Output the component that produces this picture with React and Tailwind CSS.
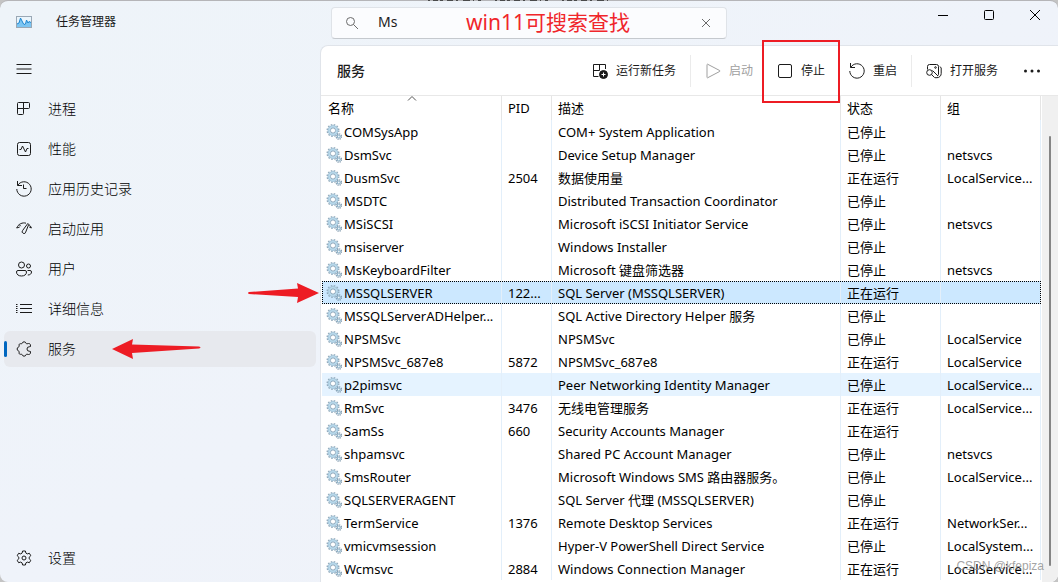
import { useState } from "react";

const NAV_ITEMS = [
  { id: "processes", label: "进程" },
  { id: "performance", label: "性能" },
  { id: "history", label: "应用历史记录" },
  { id: "startup", label: "启动应用" },
  { id: "users", label: "用户" },
  { id: "details", label: "详细信息" },
  { id: "services", label: "服务" },
];

const STOPPED = "已停止";
const RUNNING = "正在运行";

const SERVICES = [
  { name: "COMSysApp", pid: "", desc: "COM+ System Application", status: STOPPED, group: "" },
  { name: "DsmSvc", pid: "", desc: "Device Setup Manager", status: STOPPED, group: "netsvcs" },
  { name: "DusmSvc", pid: "2504", desc: "数据使用量", status: RUNNING, group: "LocalService..." },
  { name: "MSDTC", pid: "", desc: "Distributed Transaction Coordinator", status: STOPPED, group: "" },
  { name: "MSiSCSI", pid: "", desc: "Microsoft iSCSI Initiator Service", status: STOPPED, group: "netsvcs" },
  { name: "msiserver", pid: "", desc: "Windows Installer", status: STOPPED, group: "" },
  { name: "MsKeyboardFilter", pid: "", desc: "Microsoft 键盘筛选器", status: STOPPED, group: "netsvcs" },
  { name: "MSSQLSERVER", pid: "122...", desc: "SQL Server (MSSQLSERVER)", status: RUNNING, group: "" },
  { name: "MSSQLServerADHelper...", pid: "", desc: "SQL Active Directory Helper 服务", status: STOPPED, group: "" },
  { name: "NPSMSvc", pid: "", desc: "NPSMSvc", status: STOPPED, group: "LocalService" },
  { name: "NPSMSvc_687e8", pid: "5872", desc: "NPSMSvc_687e8", status: RUNNING, group: "LocalService" },
  { name: "p2pimsvc", pid: "", desc: "Peer Networking Identity Manager", status: STOPPED, group: "LocalService..." },
  { name: "RmSvc", pid: "3476", desc: "无线电管理服务", status: RUNNING, group: "LocalService..." },
  { name: "SamSs", pid: "660", desc: "Security Accounts Manager", status: RUNNING, group: "" },
  { name: "shpamsvc", pid: "", desc: "Shared PC Account Manager", status: STOPPED, group: "netsvcs" },
  { name: "SmsRouter", pid: "", desc: "Microsoft Windows SMS 路由器服务。", status: STOPPED, group: "LocalService..." },
  { name: "SQLSERVERAGENT", pid: "", desc: "SQL Server 代理 (MSSQLSERVER)", status: STOPPED, group: "" },
  { name: "TermService", pid: "1376", desc: "Remote Desktop Services", status: RUNNING, group: "NetworkSer..." },
  { name: "vmicvmsession", pid: "", desc: "Hyper-V PowerShell Direct Service", status: STOPPED, group: "LocalSystem..." },
  { name: "Wcmsvc", pid: "2884", desc: "Windows Connection Manager", status: RUNNING, group: "LocalService..." },
];

const ICONS = {
  menu: <path d="M0.5 3.5h15M0.5 8h15M0.5 12.5h15" />,
  processes: (
    <path d="M2.5 1.5h10a1 1 0 0 1 1 1v4a1 1 0 0 1-1 1H7.5v5a1 1 0 0 1-1 1h-4a1 1 0 0 1-1-1v-10a1 1 0 0 1 1-1zM7.5 1.5v6M1.5 7.5h6" />
  ),
  performance: (
    <>
      <rect x="1.5" y="1.5" width="13" height="13" rx="2" />
      <path d="M3.5 8.5H5L6.5 5l3 6 1.5-3.5h1.5" />
    </>
  ),
  history: <path d="M1.5 0v4.5H6M1.8 4.3A7.2 7.2 0 1 1 .8 8M7.5 3.5v4h3" />,
  startup: (
    <path d="M.7 7C2.5 2.8 6.5 1.2 10 2.2M.7 7l3-1M3.2 3.5l1.5 1.7M12.8 3.5c1.3.9 2.1 2 2.6 3.5l-2.2-1M11.8 2.5L6.6 9.5a1.8 1.8 0 1 0 3.1 1.6l3-7.6z" />
  ),
  users: (
    <>
      <circle cx="5.5" cy="4" r="3" />
      <circle cx="12.5" cy="5" r="2" />
      <path d="M2 9.5h7a1.5 1.5 0 0 1 1.5 1.5c0 2.5-2 4-5 4s-5-1.5-5-4A1.5 1.5 0 0 1 2 9.5zM11.5 9.5H14a1.5 1.5 0 0 1 1.5 1.5c0 1.8-1.4 3-3.7 3" />
    </>
  ),
  details: <path d="M4 3.5h12M4 7.5h12M4 11.5h12M0 3.5h1.5M0 7.5h1.5M0 11.5h1.5M0 5.5h1.5M0 9.5h1.5" />,
  services: (
    <path d="M6.2 2.2a2 2 0 0 1 3.8 0c.2.5.6.7 1.100.600l1.400-.3c.9-.2 1.800.500 1.900 1.400l.1 1.600-1.300.3a2.200 2.200 0 0 0 0 4.400l1.300.3-.1 1.600c-.1.900-1 1.600-1.900 1.400l-1.400-.3c-.5-.1-.9.1-1.100.6a2 2 0 0 1-3.800 0c-.2-.5-.6-.7-1.100-.6l-.6.1c-.9.100-1.500-.5-1.400-1.400l.1-1c0-.4-.2-.8-.6-.9a2.100 2.100 0 0 1 0-4c.4-.1.600-.5.600-.9l-.1-1c-.1-.9.5-1.500 1.400-1.400l.6.1c.5.1.9-.1 1.100-.600z" />
  ),
  settings: (
    <>
      <circle cx="8" cy="8" r="2" />
      <path d="M6.6 1h2.8l.5 2.1 1.4.8 2.1-.6 1.4 2.4L13.2 7.2v1.6l1.6 1.5-1.4 2.4-2.1-.6-1.4.8-.5 2.1H6.6l-.5-2.1-1.4-.8-2.1.6-1.4-2.4 1.6-1.5V7.2L1.2 5.7l1.4-2.4 2.1.6 1.4-.8z" />
    </>
  ),
  newTask: (
    <>
      <path d="M6.5 13.5h-5v-12h12v4.5M7.5 1.5v6M1.5 7.5h6" />
      <circle cx="11.5" cy="11.5" r="4" fill="currentColor" />
      <path d="M9.5 11.5h4M11.5 9.5v4" stroke="white" />
    </>
  ),
  start: <path d="M2 1.7v12.6a.5.5 0 0 0 .8.4l12-6.3a.5.5 0 0 0 0-.8l-12-6.3a.5.5 0 0 0-.8.4z" />,
  stop: <rect x="1.5" y="1.5" width="13" height="13" rx="1.5" />,
  restart: <path d="M1.5 0v4.5H6M1.8 4.3A7.2 7.2 0 1 1 .8 8" />,
  open: (
    <>
      <path d="M1.5 6.500V3.500a2 2 0 0 1 2-2h7a2 2 0 0 1 2 2v8a1.500 1.500 0 0 1-.8 1.300M14 3.500l1.200 1.500v5.500a4.200 4.200 0 0 1-4.200 4.200H9" />
      <circle cx="9.5" cy="4.500" r=".8" />
      <circle cx="3.500" cy="9.500" r="2.800" />
      <path d="M5.500 11.500l3.200 3.200M6.500 7.500l5.500 5.500" />
    </>
  ),
  search: (
    <>
      <circle cx="6.5" cy="6.5" r="4" />
      <path d="M9.5 9.5l4.5 4.5" />
    </>
  ),
  clear: <path d="M4 4l8 8M12 4l-8 8" />,
};

function Icon({ name }) {
  return (
    <svg viewBox="0 0 16 16" className="size-4 shrink-0 overflow-visible" fill="none" stroke="currentColor" strokeLinejoin="round" aria-hidden="true">
      {ICONS[name]}
    </svg>
  );
}

function GearsIcon() {
  return (
    <svg viewBox="0 0 16 16" className="size-4 shrink-0" fill="none" aria-hidden="true">
      <circle cx="7" cy="6.5" r="5.8" stroke="#93abbc" strokeWidth="1.4" strokeDasharray="1.6 1.44" />
      <circle cx="7" cy="6.5" r="4" stroke="#b9daec" strokeWidth="2.4" />
      <circle cx="7" cy="6.5" r="5" stroke="#94b6cc" strokeWidth=".6" />
      <circle cx="7" cy="6.5" r="2.6" fill="#ffffff" stroke="#7797ae" strokeWidth=".8" />
      <circle cx="12.8" cy="12.5" r="2.7" stroke="#7f99ad" strokeWidth="1.2" strokeDasharray="1.2 .92" />
      <circle cx="12.8" cy="12.5" r="1.5" fill="#f1f8fc" stroke="#8fb3c9" strokeWidth="1.2" />
    </svg>
  );
}

function AppLogo() {
  return (
    <svg viewBox="0 0 16 12" className="h-3 w-4 shrink-0" aria-hidden="true">
      <rect x=".5" y=".5" width="15" height="11" fill="#eaf5fc" stroke="#9aa8b5" />
      <path d="M1 8l2-1 1.5-5L7 7l1 1.5L9.5 8l1-4 1.5 3 1-1.5 2 1V11H1z" fill="#7cc5f2" />
      <path d="M1 8l2-1 1.5-5L7 7l1 1.5L9.5 8l1-4 1.5 3 1-1.5 2 1" fill="none" stroke="#1c86d1" />
    </svg>
  );
}

function TitleBar({ query, onQueryChange }) {
  return (
    <header className="flex h-[44px] shrink-0 items-start">
      <div className="flex h-[42px] w-[331px] shrink-0 items-center gap-6 pl-4">
        <AppLogo />
        <h1 className="text-xs">任务管理器</h1>
      </div>
      <div className="relative mt-1.5 flex h-8 w-[396px] items-center rounded border border-[#dfe3e8] border-b-[#c5c9ce] bg-[#fbfcfe] pr-3 pl-3 text-[#6b6b6b]">
        <Icon name="search" />
        <input
          type="text"
          aria-label="搜索"
          value={query}
          onChange={(e) => onQueryChange(e.target.value)}
          className="mb-0.5 ml-[18px] min-w-0 flex-1 bg-transparent text-sm text-[#1b1b1b] outline-none"
        />
        <button type="button" aria-label="清除" onClick={() => onQueryChange("")}>
          <Icon name="clear" />
        </button>
        <span className="pointer-events-none absolute top-0 left-[134px] text-[21px] leading-7 whitespace-nowrap text-[#f0262b]">
          win11可搜索查找
        </span>
      </div>
      <div className="ml-auto flex h-7 items-center">
        <button type="button" aria-label="最小化" className="flex w-[46px] justify-center">
          <svg viewBox="0 0 10 10" className="size-2.5" stroke="black"><path d="M0 5.5h10" /></svg>
        </button>
        <button type="button" aria-label="最大化" className="flex w-[46px] justify-center">
          <svg viewBox="0 0 10 10" className="size-2.5" fill="none" stroke="black"><rect x=".5" y=".5" width="9" height="9" rx="1" /></svg>
        </button>
        <button type="button" aria-label="关闭" className="flex w-[46px] justify-center">
          <svg viewBox="0 0 10 10" className="size-2.5" stroke="black"><path d="M0 0l10 10M10 0L0 10" /></svg>
        </button>
      </div>
    </header>
  );
}

function NavButton({ id, label, active, onClick, children }) {
  return (
    <button
      type="button"
      onClick={onClick}
      className={`relative flex h-9 w-full items-center gap-4 rounded-md pl-3 text-sm ${active ? "bg-[#e7e9ee]" : ""}`}
    >
      {active && <span className="absolute left-0 h-4 w-[3px] rounded-full bg-[#0067c0]" />}
      <Icon name={id} />
      <span className="font-light text-black">{label}</span>
      {children}
    </button>
  );
}

function Sidebar({ active, onSelect }) {
  return (
    <nav className="flex w-[320px] shrink-0 flex-col pr-1 pb-1.5 pl-1">
      <button type="button" aria-label="打开导航" className="mt-1.5 mb-1 flex h-9 items-center pl-3">
        <Icon name="menu" />
      </button>
      <div className="flex flex-col gap-1">
        {NAV_ITEMS.map((item) => (
          <NavButton
            key={item.id}
            id={item.id}
            label={item.label}
            active={active === item.id}
            onClick={() => onSelect(item.id)}
          >
            {item.id === "services" && (
              <svg viewBox="0 0 90 20" className="absolute left-[107px] h-5 w-[90px]" aria-hidden="true">
                <path d="M1 10L22 0l-1 5.5L88 7.5q3 1 0 2L21 14l1 6z" fill="#ed1c24" />
              </svg>
            )}
          </NavButton>
        ))}
      </div>
      <div className="mt-auto">
        <NavButton id="settings" label="设置" />
      </div>
    </nav>
  );
}

function ToolButton({ icon, label, disabled, children }) {
  return (
    <button type="button" disabled={disabled} className="relative flex h-8 items-center gap-2 px-3 text-xs disabled:text-[#a0a0a0]">
      <Icon name={icon} />
      {label}
      {children}
    </button>
  );
}

function Toolbar() {
  return (
    <div className="flex h-[50px] shrink-0 items-center border-b border-[#e8e8e8] pr-1.5 pl-4">
      <h2 className="text-sm font-medium">服务</h2>
      <div className="ml-auto flex items-center">
        <ToolButton icon="newTask" label="运行新任务" />
        <span className="mx-0.5 h-8 w-px bg-[#ebebeb]" />
        <ToolButton icon="start" label="启动" disabled />
        <ToolButton icon="stop" label="停止">
          <span className="pointer-events-none absolute -top-[15px] -right-[3px] h-[63px] w-[78px] border-2 border-[#ed1c24]" />
        </ToolButton>
        <ToolButton icon="restart" label="重启" />
        <span className="mx-0.5 h-8 w-px bg-[#ebebeb]" />
        <ToolButton icon="open" label="打开服务" />
        <button type="button" aria-label="更多" className="ml-0.5 flex h-8 items-center px-3">
          <svg viewBox="0 0 16 16" className="size-4" fill="currentColor">
            <circle cx="1.5" cy="8" r="1.5" />
            <circle cx="8" cy="8" r="1.5" />
            <circle cx="14.5" cy="8" r="1.5" />
          </svg>
        </button>
      </div>
    </div>
  );
}

function ServiceTable({ selected, onSelect }) {
  const rowClass = (name) => {
    if (name === selected) return "bg-[#cce8ff] outline-1 -outline-offset-1 outline-dotted outline-black";
    if (name === "p2pimsvc") return "bg-[#e5f3ff]";
    return "";
  };
  const cell = "border-r border-[#e3effa] pr-1 pl-1.5 whitespace-nowrap";
  const head = "border-r border-[#e5e5e5] pr-1 pl-1.5 text-left font-normal";

  return (
    <div className="flex min-h-0 flex-1 overflow-hidden">
      <table className="ml-px min-w-0 flex-1 table-fixed border-separate border-spacing-0 self-start text-[13px] leading-5 text-black">
        <colgroup>
          <col className="w-[180px]" />
          <col className="w-[50px]" />
          <col />
          <col className="w-[100px]" />
          <col className="w-[100px]" />
        </colgroup>
        <thead>
          <tr className="h-6">
            <th className={`${head} relative`}>
              名称
              <svg viewBox="0 0 8 4" className="absolute top-0 left-[86px] h-1 w-2 overflow-visible" fill="none" stroke="#555">
                <path d="M0 4.5L4 .5l4 4" />
              </svg>
            </th>
            <th className={head}>PID</th>
            <th className={head}>描述</th>
            <th className={head}>状态</th>
            <th className={head}>组</th>
          </tr>
        </thead>
        <tbody>
          {SERVICES.map((s) => (
            <tr key={s.name} onClick={() => onSelect(s.name)} className={`h-[23px] ${rowClass(s.name)}`}>
              <td className="border-r border-[#e3effa] pl-1">
                <div className="flex items-center gap-0.5 whitespace-nowrap">
                  <GearsIcon />
                  {s.name}
                </div>
              </td>
              <td className={cell}>{s.pid}</td>
              <td className={cell}>{s.desc}</td>
              <td className={cell}>{s.status}</td>
              <td className={cell}>{s.group}</td>
            </tr>
          ))}
        </tbody>
      </table>
      <div className="ml-px flex w-4 shrink-0 justify-center bg-[#f0f0f0] pt-10 pb-4">
        <div className="w-0.5 rounded-full bg-[#858585]" />
      </div>
    </div>
  );
}

export default function App() {
  const [query, setQuery] = useState("Ms");
  const [page, setPage] = useState("services");
  const [selected, setSelected] = useState("MSSQLSERVER");

  return (
    <div className="h-screen bg-[#c4c4c4] font-['Noto_Sans','Noto_Sans_CJK_SC',sans-serif] text-[#1b1b1b]">
      <div className="relative flex h-full flex-col overflow-hidden rounded-lg border-t border-[#b5b5b8] bg-linear-to-br from-[#eef4f9] via-[#eff3fa] to-[#f0f2f8]">
        <TitleBar query={query} onQueryChange={setQuery} />
        <div className="flex min-h-0 flex-1">
          <Sidebar active={page} onSelect={setPage} />
          <main className="flex min-w-0 flex-1 flex-col rounded-tl-lg border-t border-l border-[#e0e4ea] bg-white">
            <Toolbar />
            <ServiceTable selected={selected} onSelect={setSelected} />
          </main>
        </div>
        <svg viewBox="0 0 72 20" className="pointer-events-none absolute top-[282px] left-[248px] h-5 w-[72px]" aria-hidden="true">
          <path d="M1 9q-2 1 0 2L50 14l-1 6 22-10L49 0l1 5.5z" fill="#ed1c24" />
        </svg>
        <span className="pointer-events-none absolute right-3.5 bottom-2 font-['Liberation_Sans'] text-xs leading-4 text-[#8c8c8c]/80">
          CSDN @kfepiza
        </span>
      </div>
      {/* letters of the window behind, peeking over the top edge */}
      <svg viewBox="0 0 182 2" className="pointer-events-none absolute top-0 left-[428px] h-0.5 w-[182px]" aria-hidden="true">
        <path d="M0 .5h182" stroke="#4a4a4a" strokeDasharray="2 3 5 2 3 4 6 3 2 5 7 3 1 4 3 14" />
      </svg>
    </div>
  );
}
